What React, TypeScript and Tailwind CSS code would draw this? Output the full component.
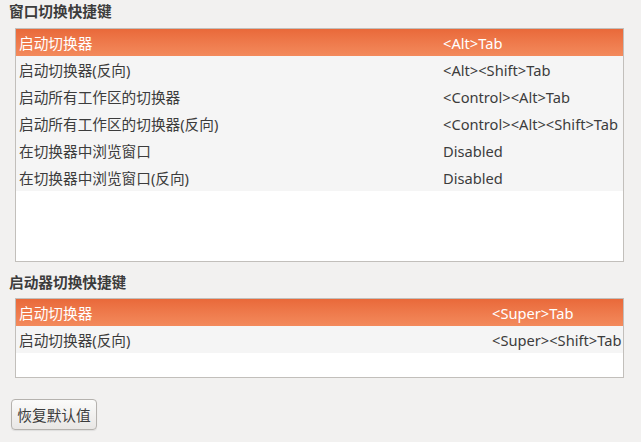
const font = "font-['Noto_Sans','Noto_Sans_CJK_SC',sans-serif]";

type Shortcut = { name: string; keys: string };

const windowShortcuts: Shortcut[] = [
  { name: "启动切换器", keys: "<Alt>Tab" },
  { name: "启动切换器(反向)", keys: "<Alt><Shift>Tab" },
  { name: "启动所有工作区的切换器", keys: "<Control><Alt>Tab" },
  { name: "启动所有工作区的切换器(反向)", keys: "<Control><Alt><Shift>Tab" },
  { name: "在切换器中浏览窗口", keys: "Disabled" },
  { name: "在切换器中浏览窗口(反向)", keys: "Disabled" },
];

const launcherShortcuts: Shortcut[] = [
  { name: "启动切换器", keys: "<Super>Tab" },
  { name: "启动切换器(反向)", keys: "<Super><Shift>Tab" },
];

const ShortcutList = ({
  items,
  nameWidth,
  className,
}: {
  items: Shortcut[];
  nameWidth: string;
  className: string;
}) => (
  <div className={`ml-[15px] w-[609px] border border-[#c2bfbb] bg-white ${className}`}>
    {items.map((s, i) => (
      <div
        key={s.name + i}
        className={
          i === 0
            ? "flex h-[27px] items-center pl-[3px] text-white bg-gradient-to-b from-[#e9693a] to-[#f38a5c]"
            : "flex h-[27px] items-center pl-[3px] text-[#3c3c3c] bg-[#f5f5f5]"
        }
      >
        <span className={`${nameWidth} shrink-0 whitespace-nowrap`}>{s.name}</span>
        <span className="whitespace-nowrap">{s.keys}</span>
      </div>
    ))}
  </div>
);

export default function App() {
  return (
    <div className={`w-[641px] h-[442px] overflow-hidden bg-[#f2f1f0] text-[14.67px] leading-[20px] ${font}`}>
      <div className="ml-[9px] pt-[1px] font-bold text-[#3c3c3c]">窗口切换快捷键</div>
      <ShortcutList items={windowShortcuts} nameWidth="w-[424px]" className="mt-[7px] h-[234px]" />

      <div className="ml-[9px] mt-[10px] font-bold text-[#3c3c3c]">启动器切换快捷键</div>
      <ShortcutList items={launcherShortcuts} nameWidth="w-[473px]" className="mt-[6px] h-[80px]" />

      <button className="ml-[11px] mt-[21px] flex h-[31px] w-[86px] items-center justify-center rounded-[4px] border border-[#b5b2ae] bg-gradient-to-b from-[#fbfbfa] to-[#e9e7e5] text-[#3c3c3c] shadow-[0_1px_1px_rgba(0,0,0,0.08)]">
        恢复默认值
      </button>
    </div>
  );
}
